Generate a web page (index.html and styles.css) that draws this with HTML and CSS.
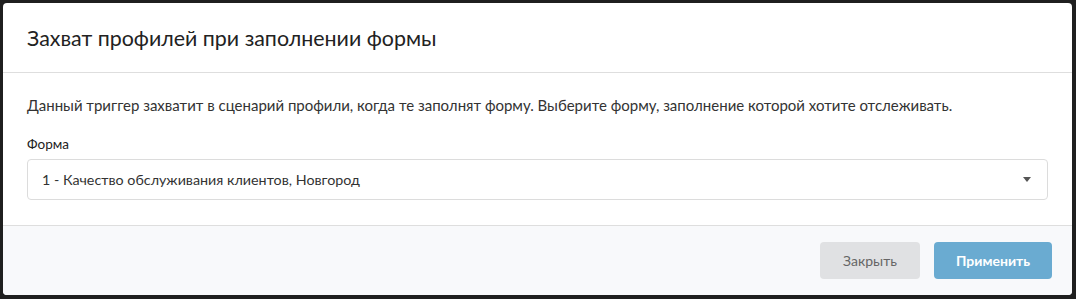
FILE: index.html
```html
<!DOCTYPE html>
<html lang="ru">
<head>
  <meta charset="UTF-8" />
  <title>Захват профилей при заполнении формы</title>
  <link rel="stylesheet" href="styles.css">
</head>
<body>

<div class="modal">
  <div class="modal-header">
    <h2 class="modal-title">Захват профилей при заполнении формы</h2>
  </div>

  <div class="modal-body">
    <p class="modal-text">Данный триггер захватит в сценарий профили, когда те заполнят форму. Выберите форму, заполнение которой хотите отслеживать.</p>
    <label class="field-label">Форма</label>
    <div class="select-box">
      <span class="select-value">1 - Качество обслуживания клиентов, Новгород</span>
      <span class="select-caret"></span>
    </div>
  </div>

  <div class="modal-footer">
    <button class="btn btn-close">Закрыть</button>
    <button class="btn btn-apply">Применить</button>
  </div>
</div>

</body>
</html>
```

FILE: styles.css
```css
body {
  margin: 0;
  padding: 3px 4px 4px 3px;
  background-color: #1f1f1f;
  font-family: Lato, "Open Sans", sans-serif;
  color: #333;
}
.modal {
  background: white;
  border-radius: 4px;
  overflow: hidden;
  height: 292px;
  display: flex;
  flex-direction: column;
}
.modal-header {
  height: 69px;
  display: flex;
  align-items: center;
  padding: 0 24px;
  border-bottom: 1px solid #dedede;
}
.modal-title {
  margin: 0;
  font-size: 21.4px;
  font-weight: 400;
  color: #222;
}
.modal-body {
  padding: 22px 24px 25px 24px;
  border-bottom: 1px solid #dedede;
}
.modal-text {
  margin: 0 0 20px 0;
  font-size: 15px;
  line-height: 20px;
  color: #333;
}
.field-label {
  display: block;
  font-size: 13.5px;
  line-height: 18px;
  color: #222;
  margin-bottom: 6px;
}
.select-box {
  height: 41px;
  box-sizing: border-box;
  border: 1px solid #dcdcdc;
  border-radius: 4px;
  display: flex;
  align-items: center;
  justify-content: space-between;
  padding: 0 16px 0 14px;
}
.select-value {
  font-size: 14.3px;
  color: #333;
}
.select-caret {
  width: 0;
  height: 0;
  border-left: 4px solid transparent;
  border-right: 4px solid transparent;
  border-top: 5px solid #555;
}
.modal-footer {
  flex: 1;
  background: #f8f9fb;
  display: flex;
  justify-content: flex-end;
  align-items: center;
  gap: 14px;
  padding: 0 20px;
}
.btn {
  height: 37px;
  border: none;
  border-radius: 4px;
  font-family: Lato, "Open Sans", sans-serif;
  font-size: 14px;
  cursor: pointer;
}
.btn-close {
  width: 100px;
  background-color: #e0e1e3;
  color: #666;
}
.btn-apply {
  width: 118px;
  background-color: #6aabd1;
  color: white;
  font-weight: bold;
}
```
